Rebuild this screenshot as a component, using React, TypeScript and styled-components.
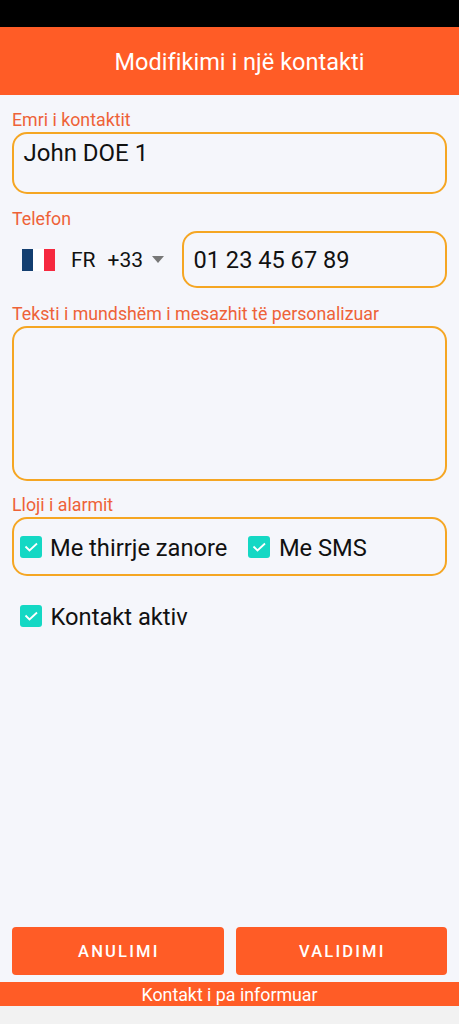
import React from "react";
import styled, { createGlobalStyle } from "styled-components";

const GlobalStyle = createGlobalStyle`
  html, body {
    margin: 0;
    padding: 0;
    background-color: #f2f2f2;
  }

  * {
    box-sizing: border-box;
  }
`;

const Page = styled.div`
  width: 459px;
  height: 1024px;
  overflow: hidden;
  display: flex;
  flex-direction: column;
  font-family: Roboto, "Liberation Sans", sans-serif;
  background-color: #f5f6fb;
`;

const StatusBar = styled.div`
  height: 27px;
  background-color: #000;
`;

const Header = styled.h1`
  margin: 0;
  height: 68px;
  display: flex;
  align-items: center;
  justify-content: center;
  padding: 2px 0 0 20px;
  background-color: #ff5c26;
  color: #fff;
  font-size: 23.5px;
  font-weight: 400;
  letter-spacing: 0.04px;
`;

const Form = styled.div`
  flex: 1;
  display: flex;
  flex-direction: column;
  padding: 15px 12px 0;
`;

const Label = styled.div`
  height: 22px;
  font-size: 17.8px;
  line-height: 20px;
  color: #ee6238;
`;

const Box = styled.div<{ $height: number }>`
  height: ${(p) => p.$height}px;
  border: 2.5px solid #f5a623;
  border-radius: 15px;
`;

const NameBox = styled(Box)`
  padding: 4px 9.5px;
  font-size: 24px;
  line-height: 30px;
  color: #111;
  margin-bottom: 15px;
`;

const PhoneRow = styled.div`
  display: flex;
  align-items: center;
  margin-bottom: 16px;
`;

const CountryPicker = styled.div`
  width: 170px;
  display: flex;
  align-items: center;
  padding-left: 10px;
  font-size: 21px;
  color: #111;
`;

const Flag = styled.svg`
  width: 33px;
  height: 22px;
  margin-right: 16px;
`;

const Dial = styled.span`
  margin-left: 12px;
`;

const Caret = styled.span`
  margin-left: 9px;
  width: 0;
  height: 0;
  border-left: 6px solid transparent;
  border-right: 6px solid transparent;
  border-top: 7px solid #777;
`;

const PhoneBox = styled(Box)`
  flex: 1;
  display: flex;
  align-items: center;
  padding: 0 9.5px;
  font-size: 23.6px;
  color: #111;
`;

const MessageBox = styled(Box)`
  margin-bottom: 14px;
`;

const AlarmBox = styled(Box)`
  display: flex;
  align-items: center;
  padding-left: 5.5px;
  gap: 21px;
`;

const CheckRow = styled.div`
  display: flex;
  align-items: center;
  gap: 8.5px;
  font-size: 23.7px;
  color: #111;
`;

const CheckText = styled.span`
  padding-top: 2px;
`;

const ActiveRow = styled(CheckRow)`
  margin-top: 25px;
  padding-left: 8px;
`;

const CheckMark = styled.svg`
  width: 22px;
  height: 22px;
  flex-shrink: 0;
`;

const Spacer = styled.div`
  flex: 1;
`;

const Buttons = styled.div`
  display: grid;
  grid-template-columns: 1fr 1fr;
  gap: 12px;
  margin-bottom: 7px;
`;

const Button = styled.div`
  height: 48px;
  display: flex;
  align-items: center;
  justify-content: center;
  padding-left: 2px;
  border-radius: 4px;
  background-color: #ff5c26;
  color: #fff;
  font-size: 16.5px;
  font-weight: 500;
  letter-spacing: 2.2px;
`;

const Footer = styled.div`
  height: 24px;
  display: flex;
  align-items: center;
  justify-content: center;
  background-color: #ff5c26;
  color: #fff;
  font-size: 17.8px;
`;

const NavBar = styled.div`
  height: 18px;
  background-color: #f2f2f2;
`;

const Check = () => (
  <CheckMark viewBox="0 0 22 22">
    <rect width="22" height="22" rx="3" fill="#14d8c4" />
    <path d="M5.5 10.5l4 4L17 7.5" fill="none" stroke="#fff" strokeWidth="1.8" />
  </CheckMark>
);

const App: React.FC = () => {
  return (
    <Page>
      <GlobalStyle />
      <StatusBar />
      <Header>Modifikimi i një kontakti</Header>
      <Form>
        <Label>Emri i kontaktit</Label>
        <NameBox $height={62}>John DOE 1</NameBox>

        <Label>Telefon</Label>
        <PhoneRow>
          <CountryPicker>
            <Flag viewBox="0 0 33 22">
              <rect width="11" height="22" fill="#143f70" />
              <rect x="11" width="11" height="22" fill="#fff" />
              <rect x="22" width="11" height="22" fill="#f6293f" />
            </Flag>
            FR
            <Dial>+33</Dial>
            <Caret />
          </CountryPicker>
          <PhoneBox $height={57}>01 23 45 67 89</PhoneBox>
        </PhoneRow>

        <Label>Teksti i mundshëm i mesazhit të personalizuar</Label>
        <MessageBox $height={155} />

        <Label>Lloji i alarmit</Label>
        <AlarmBox $height={59}>
          <CheckRow>
            <Check />
            <CheckText>Me thirrje zanore</CheckText>
          </CheckRow>
          <CheckRow>
            <Check />
            <CheckText>Me SMS</CheckText>
          </CheckRow>
        </AlarmBox>

        <ActiveRow>
          <Check />
          <CheckText>Kontakt aktiv</CheckText>
        </ActiveRow>

        <Spacer />

        <Buttons>
          <Button>ANULIMI</Button>
          <Button>VALIDIMI</Button>
        </Buttons>
      </Form>
      <Footer>Kontakt i pa informuar</Footer>
      <NavBar />
    </Page>
  );
};

export default App;
